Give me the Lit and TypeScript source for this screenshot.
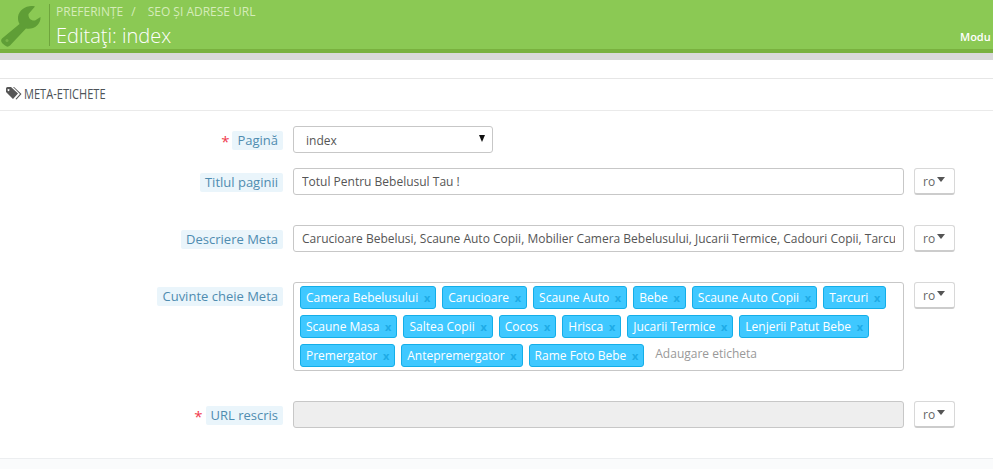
import { LitElement, html, css, svg } from "lit";
import { customElement } from "lit/decorators.js";

const tagRows = [
  ["Camera Bebelusului", "Carucioare", "Scaune Auto", "Bebe", "Scaune Auto Copii", "Tarcuri"],
  ["Scaune Masa", "Saltea Copii", "Cocos", "Hrisca", "Jucarii Termice", "Lenjerii Patut Bebe"],
  ["Premergator", "Antepremergator", "Rame Foto Bebe"],
];

@customElement("app-root")
export class AppRoot extends LitElement {
  static styles = css`
    :host { display: block; width: 993px; height: 469px; overflow: hidden; background: #fff; font-family: "Open Sans", sans-serif; font-size: 12px; color: #555; position: relative; }
    * { box-sizing: border-box; }
    .head { height: 53px; background: #8bc954; border-bottom: 4px solid #79b13f; display: flex; position: relative; overflow: hidden; }
    .wrench { width: 49px; height: 49px; flex: none; }
    .titles { border-left: 1px solid #6fa53d; margin-top: 4px; height: 42px; padding-left: 6px; }
    .crumbs { font-size: 12px; line-height: 16px; color: #d5ecb9; white-space: nowrap; display: flex; }
    .sep { margin: 0 12px 0 8px; }
    .title { font-size: 20px; line-height: 26px; margin-top: 3px; color: #fff; font-weight: 300; }
    .modu { position: absolute; left: 960px; top: 29px; color: #fff; font-size: 11px; font-weight: 600; line-height: 16px; white-space: nowrap; }
    .band { height: 7px; background: #d9d9d9; }
    .panel { margin-top: 18px; border-top: 1px solid #e6e6e6; border-bottom: 1px solid #eaeaea; height: 33px; display: flex; align-items: center; padding-left: 6px; gap: 2px; color: #555; }
    .panel svg { width: 16px; height: 13px; flex: none; margin-top: -3px; }
    .panel span { font-size: 14px; font-weight: 400; line-height: 18px; margin-top: -2px; display: inline-block; transform: scaleX(0.79); transform-origin: left center; white-space: nowrap; color: #4d5358; }
    .form { padding-top: 15px; }
    .row { display: flex; align-items: flex-start; gap: 10px; }
    .lab { width: 283px; flex: none; display: flex; justify-content: flex-end; align-items: center; height: 27px; gap: 3px; padding-top: 1px; }
    .lab.top { height: auto; padding-top: 5px; }
    .lab b { font-weight: 400; font-size: 13px; line-height: 19px; color: #4f8cb0; background: #eaf5fb; padding: 0 5px; border-radius: 2px; white-space: nowrap; }
    .star { color: #f0394d; font-size: 15px; line-height: 15px; font-weight: 400; margin-top: 2px; }
    .input { width: 611px; height: 27px; border: 1px solid #c7c7c7; border-radius: 3px; padding: 0 8px; line-height: 25px; color: #555; background: #fff; flex: none; }
    .input div { white-space: nowrap; overflow: hidden; }
    .input.dis { background: #eee; }
    .select { width: 200px; height: 27px; border: 1px solid #c7c7c7; border-radius: 3px; padding-left: 12px; line-height: 27px; position: relative; color: #555; }
    .select i { position: absolute; right: 7px; top: 8px; width: 0; height: 0; border-left: 3.5px solid transparent; border-right: 3.5px solid transparent; border-top: 7px solid #111; }
    .btn { width: 41px; height: 27px; border: 1px solid #d8d8d8; border-bottom: 2px solid #ccc; border-radius: 3px; display: flex; align-items: center; padding-left: 8px; gap: 2px; color: #666; flex: none; }
    .btn i { width: 0; height: 0; border-left: 4.5px solid transparent; border-right: 4.5px solid transparent; border-top: 5px solid #555; margin-top: -3px; }
    .r1 { margin-bottom: 15px; }
    .r2, .r3, .r4 { margin-bottom: 30px; }
    .tags { width: 611px; height: 89px; border: 1px solid #c7c7c7; border-radius: 3px; padding: 3px 6px; flex: none; display: flex; flex-direction: column; gap: 6px; }
    .tagrow { display: flex; gap: 6px; height: 23px; align-items: center; }
    .tag { height: 23px; background: #3fc8ff; border: 1px solid #14aee8; border-radius: 3px; color: #fff; padding: 0 5px; line-height: 21px; display: flex; white-space: nowrap; }
    .tag em { font-style: normal; font-weight: 700; color: #1eabe6; font-size: 11px; margin-left: 5.7px; }
    .ph { color: #999; margin: -4px 0 0 5px; white-space: nowrap; }
    .foot { border-top: 1px solid #eceef0; background: #fafbfc; height: 11px; position: absolute; left: 0; top: 458px; width: 993px; }
  `;

  wrench() {
    return svg`<path fill="#5f9e36" d="M35 6.5 C28 4.5 19 9 18 17 C17.8 20 18.5 22 19.5 24 L2 38.5 C0.5 40 1 42 2.5 43.5 L5 45.5 C6.5 47 8.5 47 10 45.5 L26 28.5 C33 30 41 25 40.5 17 L35 20.5 C31 21 28 18 28.5 14 Z"/>
    <circle cx="7" cy="40.5" r="1.5" fill="#79b348"/>`;
  }

  private row(cls: string, label: string, star: boolean, field: unknown, btn = true, top = false) {
    return html`<div class="row ${cls}">
      <div class="lab ${top ? "top" : ""}">${star ? html`<span class="star">*</span>` : ""}<b>${label}</b></div>
      ${field}
      ${btn ? html`<div class="btn">ro<i></i></div>` : ""}
    </div>`;
  }

  render() {
    return html`
      <div class="head">
        <svg class="wrench" viewBox="0 0 49 49">${this.wrench()}</svg>
        <div class="titles">
          <div class="crumbs"><span>PREFERINȚE</span><span class="sep">/</span><span>SEO ȘI ADRESE URL</span></div>
          <div class="title">Editaţi: index</div>
        </div>
        <div class="modu">Modu</div>
      </div>
      <div class="band"></div>
      <div class="panel">
        <svg viewBox="0 0 16 13"><path fill="#555" d="M0 1.5 Q0 0 1.5 0 H5 L12 6.5 L7 12 L0 5 Z M2.5 2 a1 1 0 1 0 .01 0Z M7 0 H8 L15.5 7 L10.5 12.5 L9.5 12 L14 7 Z" fill-rule="evenodd"/></svg>
        <span>META-ETICHETE</span>
      </div>
      <div class="form">
        ${this.row("r1", "Pagină", true, html`<div class="select">index<i></i></div>`, false)}
        ${this.row("r2", "Titlul paginii", false, html`<div class="input"><div>Totul Pentru Bebelusul Tau !</div></div>`)}
        ${this.row("r3", "Descriere Meta", false, html`<div class="input"><div>Carucioare Bebelusi, Scaune Auto Copii, Mobilier Camera Bebelusului, Jucarii Termice, Cadouri Copii, Tarcuri</div></div>`)}
        ${this.row("r4", "Cuvinte cheie Meta", false, html`<div class="tags">
          ${tagRows.map((r, i) => html`<div class="tagrow">
            ${r.map((t) => html`<div class="tag">${t}<em>x</em></div>`)}
            ${i === 2 ? html`<span class="ph">Adaugare eticheta</span>` : ""}
          </div>`)}
        </div>`, true, true)}
        ${this.row("r5", "URL rescris", true, html`<div class="input dis"></div>`)}
      </div>
      <div class="foot"></div>
    `;
  }
}
